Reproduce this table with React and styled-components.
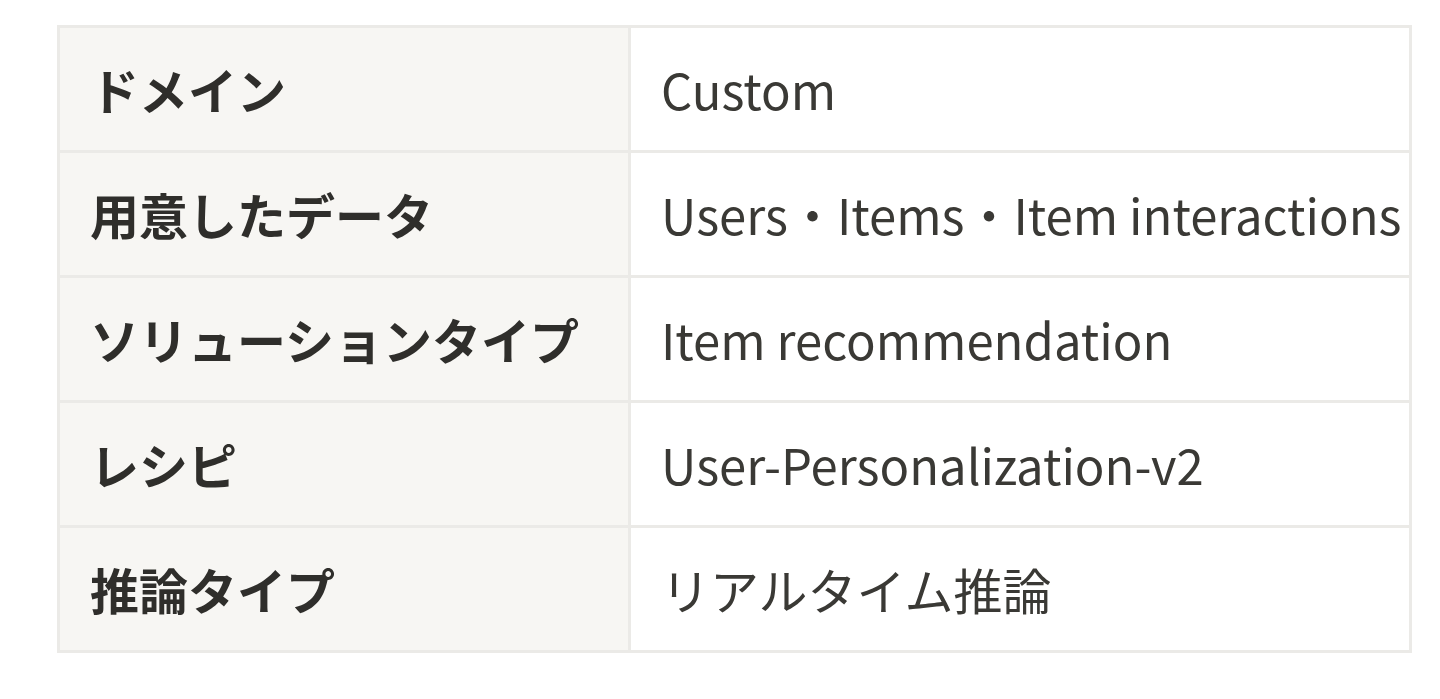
import React from 'react'
import styled, { createGlobalStyle } from 'styled-components'

const GlobalStyle = createGlobalStyle`
  html, body {
    margin: 0;
    padding: 0;
    background: #ffffff;
  }
  body {
    font-family: "Noto Sans CJK JP", "Noto Sans", sans-serif;
    color: #37352f;
  }
`

const rows = [
  { label: 'ドメイン', value: 'Custom' },
  { label: '用意したデータ', value: 'Users・Items・Item interactions' },
  { label: 'ソリューションタイプ', value: 'Item recommendation' },
  { label: 'レシピ', value: 'User-Personalization-v2' },
  { label: '推論タイプ', value: 'リアルタイム推論' },
]

const Page = styled.div`
  padding: 25px 0 0 57px;
`

const Table = styled.table`
  border-collapse: collapse;
  width: 1355px;
  table-layout: fixed;
  border: 3px solid #ebeae7;
`

const Col = styled.col`
  width: ${({ $w }) => $w || 'auto'};
`

const Row = styled.tr`
  height: 125px;
`

const Cell = styled.td`
  border: 3px solid #ebeae7;
  padding: 0 0 0 ${({ $head }) => ($head ? '30px' : '30px')};
  vertical-align: middle;
  font-size: 49px;
  line-height: 1.2;
  white-space: nowrap;
  font-weight: ${({ $head }) => ($head ? 700 : 400)};
  background: ${({ $head }) => ($head ? '#f7f6f3' : '#ffffff')};
  color: ${({ $head }) => ($head ? '#2f2e2b' : '#3a3935')};
`

export default function App() {
  return (
    <Page>
      <GlobalStyle />
      <Table>
        <colgroup>
          <Col $w="571px" />
          <Col />
        </colgroup>
        <tbody>
          {rows.map((r) => (
            <Row key={r.label}>
              <Cell $head>{r.label}</Cell>
              <Cell>{r.value}</Cell>
            </Row>
          ))}
        </tbody>
      </Table>
    </Page>
  )
}
